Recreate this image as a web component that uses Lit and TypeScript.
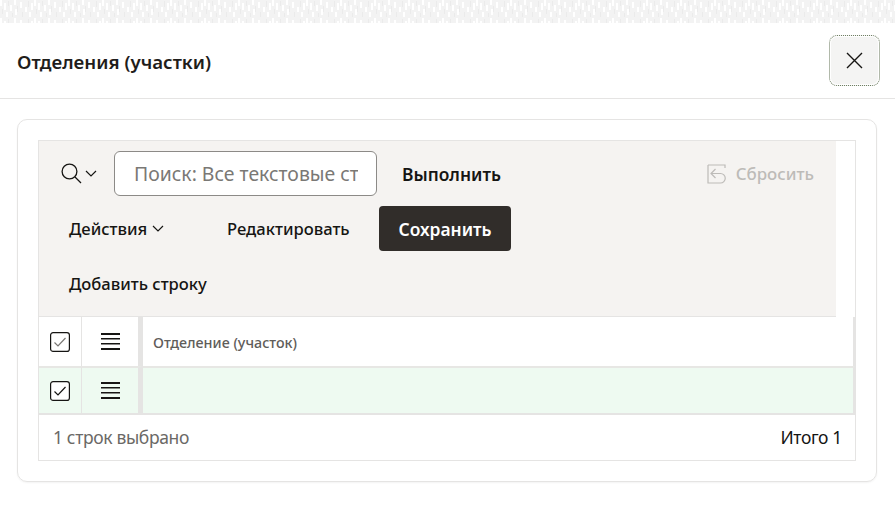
import { LitElement, html, css, svg } from "lit";
import { customElement } from "lit/decorators.js";

const chevron = (w: number) => html`<svg width=${w} height="7" viewBox="0 0 12 7" fill="none" stroke="#161513" stroke-width="1.2"><path d="M1 1l5 5 5-5"/></svg>`;
const menu = html`<svg class="menu" width="19" height="17" viewBox="0 0 19 17" fill="#161513"><rect y="0" width="19" height="2"/><rect y="5" width="19" height="1.5"/><rect y="10" width="19" height="1.5"/><rect y="15" width="19" height="2"/></svg>`;
const check = (stroke: string) => html`<svg class="check" width="20" height="20" viewBox="0 0 20 20" fill="#fff"><rect x=".6" y=".6" width="18.8" height="18.8" rx="2.5" stroke="#161513" stroke-width="1.2"/><path d="M4.5 10.5l3.5 3.5 7.5-8" fill="none" stroke=${stroke} stroke-width="1.2"/></svg>`;

// Tile of light and grey vertical dashes for the blurred page behind the dialog.
const dashes: [number, number, number, number, string][] = [
  [0, 0, 2, 6, "#fff"], [4, 3, 2, 7, "#fff"], [8, 1, 1, 5, "#ebebeb"], [10, 5, 2, 6, "#fff"],
  [14, 0, 2, 5, "#fff"], [17, 6, 1, 6, "#ebebeb"], [20, 2, 2, 6, "#fff"], [25, 7, 2, 5, "#fff"],
  [28, 1, 1, 6, "#ebebeb"], [31, 3, 2, 7, "#fff"], [2, 9, 1, 5, "#ebebeb"], [6, 12, 2, 5, "#fff"],
  [12, 13, 1, 4, "#ebebeb"], [15, 9, 2, 6, "#fff"], [22, 12, 1, 5, "#ebebeb"], [29, 12, 2, 5, "#fff"],
];

@customElement("app-root")
export class AppRoot extends LitElement {
  static styles = css`
    :host { display: block; width: 895px; height: 519px; background: #fff; overflow: hidden; font-family: "Noto Sans", sans-serif; color: #161513; }
    .strip { display: block; width: 895px; height: 23px; }
    .head { height: 76px; box-sizing: border-box; border-bottom: 1px solid #e5e4e3; display: flex; align-items: center; justify-content: space-between; padding: 0 15px 0 17px; }
    .title { font-size: 18.7px; font-weight: 600; color: #1f1d1b; margin-top: 1px; }
    .close { width: 51px; height: 51px; box-sizing: border-box; border: 1px dotted #6f7f63; border-radius: 8px; background: #f4f4f3; box-shadow: inset 0 0 0 1px #fff; display: flex; align-items: center; justify-content: center; padding: 0; }
    .body { padding: 20px 18px 0 17px; }
    .card { height: 363px; box-sizing: border-box; border: 1px solid #e5e4e3; border-radius: 10px; padding: 20px; box-shadow: 0 1px 2px rgba(0,0,0,.05); }
    .region { height: 321px; box-sizing: border-box; border: 1px solid #e5e4e3; display: flex; flex-direction: column; }
    .toolbar { width: 797px; height: 176px; box-sizing: border-box; background: #f5f3f1; border-bottom: 1px solid #e5e4e3; display: flex; flex-direction: column; flex: none; }
    .row { display: flex; align-items: center; flex: none; }
    .row1 { padding-left: 22px; height: 65px; }
    .row2 { padding-left: 30px; height: 45px; }
    .row3 { padding-left: 30px; flex: 1; }
    .searchicon { display: flex; align-items: center; gap: 3px; width: 53px; flex: none; }
    .input { width: 263px; height: 45px; box-sizing: border-box; border: 1px solid #8c8a87; border-radius: 6px; background: #fff; font: 400 19.4px "Noto Sans", sans-serif; padding: 0 18px 0 19px; flex: none; outline: none; }
    .input::placeholder { color: #7a7875; opacity: 1; }
    .label { font-size: 16.6px; font-weight: 500; color: #161513; white-space: nowrap; }
    .strong { font-size: 17.4px; font-weight: 600; }
    .run { margin-left: 25px; }
    .reset { margin-left: auto; margin-right: 22px; display: flex; align-items: center; gap: 10px; font-size: 16.9px; font-weight: 500; color: #bdbbb8; }
    .actions { display: flex; align-items: center; gap: 5px; width: 158px; flex: none; }
    .edit { width: 152px; flex: none; }
    .save { width: 132px; height: 45px; flex: none; box-sizing: border-box; background: #312d2a; color: #fff; border-radius: 4px; display: flex; align-items: center; justify-content: center; }
    .grid { flex: none; display: grid; grid-template-columns: 43px 61px 1fr; }
    .c { display: flex; align-items: center; justify-content: center; box-sizing: border-box; }
    .h { height: 49px; border-right: 1px solid #e5e4e3; }
    .h.third { border-right: 2px solid #e5e4e3; justify-content: flex-start; padding: 2px 0 0 10px; font-size: 14.3px; font-weight: 500; color: #5f5d5a; }
    .h.second { border-right-width: 5px; }
    .d { height: 49px; background: #eefaf1; border-right: 1px solid #e5e4e3; border-top: 2px solid #e7e7e4; border-bottom: 2px solid #e5e4e3; }
    .d.second { border-right-width: 5px; }
    .d.third { border-right: 2px solid #e5e4e3; }
    .foot { flex: 1; display: flex; align-items: center; justify-content: space-between; padding: 0 13px 2px 14px; font-size: 17.5px; letter-spacing: -.35px; }
    .sel { color: #6b6966; }
  `;

  render() {
    return html`
      <svg class="strip" width="895" height="23" aria-hidden="true">
        <defs>
          <pattern id="dash" width="34" height="18" patternUnits="userSpaceOnUse">
            <rect width="34" height="18" fill="#f3f3f3"/>
            ${dashes.map(([x, y, w, h, f]) => svg`<rect x=${x} y=${y} width=${w} height=${h} fill=${f}/>`)}
          </pattern>
        </defs>
        <rect width="895" height="23" fill="url(#dash)"/>
      </svg>
      <div class="head">
        <div class="title">Отделения (участки)</div>
        <button class="close" aria-label="Закрыть">
          <svg width="17" height="17" viewBox="0 0 17 17" fill="none" stroke="#161513" stroke-width="1.4"><path d="M1 1l15 15M16 1L1 16"/></svg>
        </button>
      </div>
      <div class="body">
        <div class="card">
          <div class="region">
            <div class="toolbar">
              <div class="row row1">
                <div class="searchicon">
                  <svg width="21" height="21" viewBox="0 0 21 21" fill="none" stroke="#161513" stroke-width="1.3"><circle cx="8.5" cy="8.5" r="7.4"/><path d="M14 14l6 6"/></svg>
                  ${chevron(12)}
                </div>
                <input class="input" placeholder="Поиск: Все текстовые столбцы" />
                <div class="label strong run">Выполнить</div>
                <div class="reset">
                  <svg width="19" height="20" viewBox="0 0 19 20" fill="none" stroke="#bdbbb8" stroke-width="1.2"><path d="M1 1H18V4M1 1V19H13.500a4.500 4.500 0 0 0 0-9.500H4M8.500 5L4 9.500l4.500 4.500"/></svg>
                  <span>Сбросить</span>
                </div>
              </div>
              <div class="row row2">
                <div class="label actions">Действия ${chevron(12)}</div>
                <div class="label edit">Редактировать</div>
                <div class="label strong save">Сохранить</div>
              </div>
              <div class="row row3"><div class="label">Добавить строку</div></div>
            </div>
            <div class="grid">
              <div class="c h">${check("#7a7875")}</div>
              <div class="c h second">${menu}</div>
              <div class="c h third">Отделение (участок)</div>
              <div class="c d">${check("#161513")}</div>
              <div class="c d second">${menu}</div>
              <div class="c d third"></div>
            </div>
            <div class="foot"><span class="sel">1 строк выбрано</span><span>Итого 1</span></div>
          </div>
        </div>
      </div>
    `;
  }
}
